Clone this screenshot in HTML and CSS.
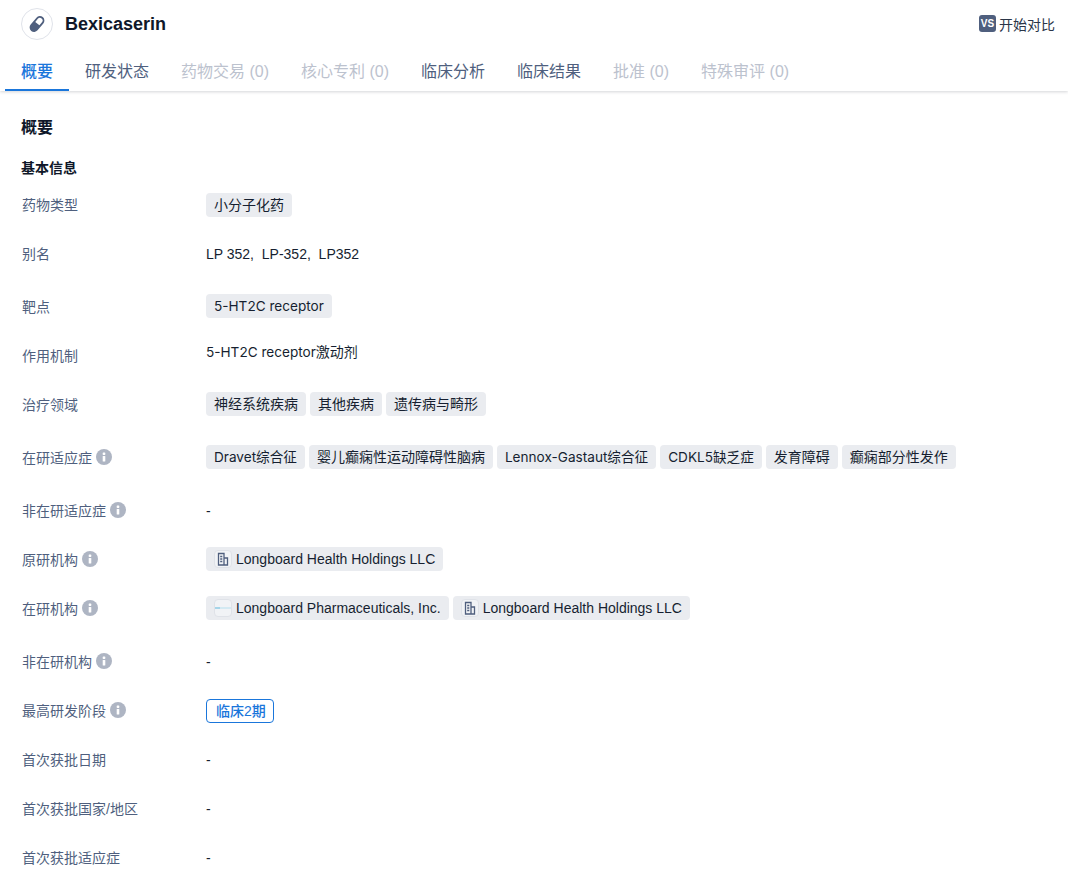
FILE: index.html
```html
<!DOCTYPE html>
<html lang="zh">
<head>
<meta charset="utf-8">
<title>Bexicaserin</title>
<link rel="stylesheet" href="styles.css">
</head>
<body>
<svg class="defs" width="0" height="0" aria-hidden="true">
  <symbol id="info" viewBox="0 0 16 16"><circle cx="8" cy="8" r="8" fill="#aeb5c3"/><rect x="6.700" y="3.500" width="2.600" height="2.400" rx=".6" fill="#fff"/><rect x="6.700" y="7" width="2.600" height="5.500" rx=".6" fill="#fff"/></symbol>
  <symbol id="bld" viewBox="0 0 12 14"><path d="M1.500 13V1.500h5.500V13zM7 6h3.500v7H7M3.200 4.500h2.100M3.200 7h2.100M3.200 9.500h2.100" fill="none" stroke="#4f5f7e" stroke-width="1.300"/></symbol>
</svg>
<header class="top">
  <div class="head">
    <div class="title-wrap">
      <span class="logo"><svg width="22" height="22" viewBox="0 0 22 22"><g transform="rotate(-50 11 11)"><rect x="2" y="6.500" width="18" height="9" rx="4.500" fill="#4f5f7e"/><path d="M11.500 8.300H15.500a2.700 2.700 0 0 1 0 5.400H11.500z" fill="#fff"/></g></svg></span>
      <h1 class="title">Bexicaserin</h1>
    </div>
    <div class="compare"><span class="vs">VS</span><span>开始对比</span></div>
  </div>
  <nav class="tabs">
    <a class="tab active">概要</a>
    <a class="tab">研发状态</a>
    <a class="tab off">药物交易 (0)</a>
    <a class="tab off">核心专利 (0)</a>
    <a class="tab">临床分析</a>
    <a class="tab">临床结果</a>
    <a class="tab off">批准 (0)</a>
    <a class="tab off">特殊审评 (0)</a>
  </nav>
</header>
<main class="content">
  <h2 class="h2">概要</h2>
  <h3 class="h3">基本信息</h3>
  <div class="rows">
    <div class="row h49"><div class="label">药物类型</div><div class="val down"><span class="tag">小分子化药</span></div></div>
    <div class="row h53"><div class="label">别名</div><div class="val plain down">LP 352,&nbsp; LP-352,&nbsp; LP352</div></div>
    <div class="row h49"><div class="label">靶点</div><div class="val"><span class="tag wide">5-HT2C receptor</span></div></div>
    <div class="row h49"><div class="label">作用机制</div><div class="val plain up"><span><span class="wide">5-HT2C receptor</span>激动剂</span></div></div>
    <div class="row h53"><div class="label">治疗领域</div><div class="val"><span class="tag">神经系统疾病</span><span class="tag">其他疾病</span><span class="tag">遗传病与畸形</span></div></div>
    <div class="row h53"><div class="label">在研适应症<svg class="info"><use href="#info"/></svg></div><div class="val"><span class="tag wide">Dravet综合征</span><span class="tag">婴儿癫痫性运动障碍性脑病</span><span class="tag wide">Lennox-Gastaut综合征</span><span class="tag wide">CDKL5缺乏症</span><span class="tag">发育障碍</span><span class="tag">癫痫部分性发作</span></div></div>
    <div class="row h49"><div class="label">非在研适应症<svg class="info"><use href="#info"/></svg></div><div class="val plain down">-</div></div>
    <div class="row h49"><div class="label">原研机构<svg class="info"><use href="#info"/></svg></div><div class="val"><span class="tag org"><span class="orgicon"><svg class="bld"><use href="#bld"/></svg></span>Longboard Health Holdings LLC</span></div></div>
    <div class="row h53"><div class="label">在研机构<svg class="info"><use href="#info"/></svg></div><div class="val"><span class="tag org"><span class="orgicon"><svg width="16" height="4" viewBox="0 0 16 4"><rect x="0" y="1.500" width="5" height="1" fill="#5cb8dc"/><rect x="5" y="1.500" width="11" height="1" fill="#b5dfee"/></svg></span>Longboard Pharmaceuticals, Inc.</span><span class="tag org"><span class="orgicon"><svg class="bld"><use href="#bld"/></svg></span>Longboard Health Holdings LLC</span></div></div>
    <div class="row h49"><div class="label">非在研机构<svg class="info"><use href="#info"/></svg></div><div class="val plain down">-</div></div>
    <div class="row h49"><div class="label">最高研发阶段<svg class="info"><use href="#info"/></svg></div><div class="val down"><span class="phase">临床2期</span></div></div>
    <div class="row h49"><div class="label">首次获批日期</div><div class="val plain down">-</div></div>
    <div class="row h49"><div class="label">首次获批国家/地区</div><div class="val plain down">-</div></div>
    <div class="row h49"><div class="label">首次获批适应症</div><div class="val plain down">-</div></div>
  </div>
</main>
</body>
</html>
```
FILE: styles.css
```css
* { box-sizing: border-box; }
html, body { margin: 0; padding: 0; }
body {
  background: #fff;
  color: #0f1729;
  font-family: "Liberation Sans", "Noto Sans CJK SC", sans-serif;
  font-size: 14px;
  height: 888px;
  overflow: hidden;
}
.defs { display: block; height: 0; }
.top { box-shadow: 0 1px 3px rgba(15, 23, 41, .18); height: 91px; }
.head { display: flex; justify-content: space-between; align-items: center; padding: 0 13px 0 21px; height: 47px; }
.title-wrap { display: flex; align-items: center; gap: 12px; }
.logo { width: 32px; height: 32px; border: 1px solid #e0e3ea; border-radius: 50%; display: flex; align-items: center; justify-content: center; }
.title { margin: 0; font-size: 18px; font-weight: 700; line-height: 24px; }
.compare { display: flex; align-items: center; gap: 3px; font-size: 14px; color: #2a3548; }
.vs { width: 17px; height: 17px; background: #4f5f7e; color: #fff; border-radius: 3px; font-size: 10px; font-weight: 700; line-height: 17px; text-align: center; }
.tabs { display: flex; padding-left: 5px; height: 44px; }
.tab { height: 44px; padding: 0 16px; line-height: 50px; font-size: 16px; color: #4f5f7e; border-bottom: 2px solid transparent; white-space: nowrap; }
.tab.active { color: #1a76db; border-bottom-color: #1a76db; font-weight: 500; }
.tab.off { color: #bcc2ce; }
.content { padding: 0 21px; }
.h2 { margin: 0; padding-top: 25px; font-size: 16px; line-height: 24px; font-weight: 700; }
.h3 { margin: 0; padding-top: 18px; font-size: 14px; line-height: 20px; font-weight: 700; }
.rows { padding-top: 14px; margin-left: 1px; }
.row { display: flex; align-items: flex-start; }
.h49 { height: 49px; }
.h53 { height: 53px; }
.label { width: 184px; flex: none; display: flex; align-items: center; gap: 4px; height: 24px; font-size: 14px; color: #4f5f7e; }
.info { width: 16px; height: 16px; flex: none; }
.val { display: flex; gap: 4px; font-size: 14px; line-height: 24px; }
.tag { height: 24px; padding: 0 8px; background: #eaecf0; border-radius: 4px; color: #161f30; white-space: nowrap; line-height: 24px; }
.wide { font-family: Inter, "Noto Sans CJK SC", sans-serif; font-size: 13.600px; }
.org { display: inline-flex; align-items: center; padding-left: 8px; }
.orgicon { width: 18px; height: 18px; margin-right: 4px; border: 1px solid #dfe2e8; border-radius: 4px; background: #f1f3f6; display: flex; align-items: center; justify-content: center; overflow: hidden; }
.bld { width: 12px; height: 14px; }
.plain { color: #161f30; }
.up { margin-top: -3px; }
.down { margin-top: 1px; }
.phase { height: 24px; padding: 0 7px 0 9px; border: 1px solid #1a76db; border-radius: 4px; color: #1a76db; line-height: 22px; font-weight: 500; }
```
